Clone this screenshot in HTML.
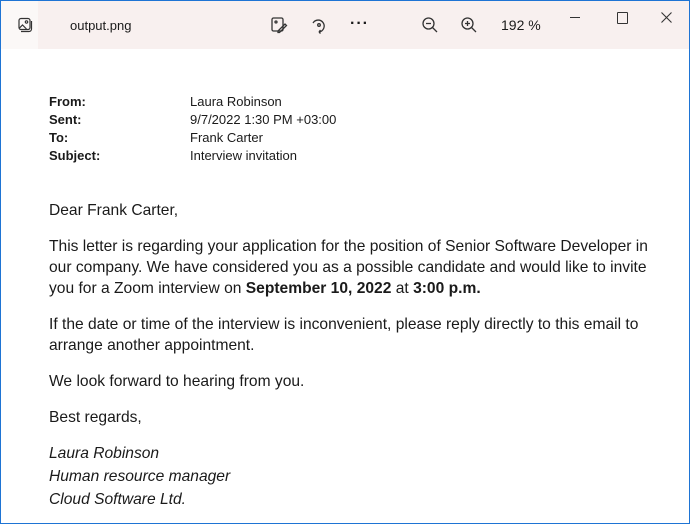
<html><head><style>
body{margin:0;width:690px;height:524px;overflow:hidden;background:#fff;font-family:"Liberation Sans",sans-serif;color:#1a1a1a;position:relative}
.win{position:absolute;left:0;top:0;width:688px;height:522px;border:1px solid #1e74d4;}
.bar{position:absolute;left:0;top:0;width:688px;height:48px;background:#f8f0ef}
.bar .l{position:absolute;left:0;top:0;width:37px;height:48px;background:#fbf8f7}
.t{position:absolute;font-size:13px;top:17px}
.hd{position:absolute;font-size:13px;line-height:18px}
.b{position:absolute;left:48px;font-size:15.6px;line-height:21px;width:612px}
</style></head><body>
<div class="win">
<div class="bar"><div class="l"></div>
<svg style="position:absolute;left:16px;top:16px" width="16" height="16" viewBox="0 0 16 16" fill="none" stroke="#333" stroke-width="1.2"><rect x="2" y="1.5" width="11" height="11" rx="2"/><path d="M4 14.5h8a2.5 2.5 0 0 0 2.5-2.5V4"/><circle cx="9.5" cy="5" r="1.2"/><path d="M2.5 11l3-3 4 4"/></svg>
<div class="t" style="left:69px">output.png</div>
<svg style="position:absolute;left:269px;top:15px" width="18" height="18" viewBox="0 0 18 18" fill="none" stroke="#333" stroke-width="1.3"><rect x="2" y="2" width="11" height="13" rx="1.5"/><path d="M8 15l7-7 1.5 1.5-7 7H8z"/><circle cx="6" cy="6" r="1"/></svg>
<svg style="position:absolute;left:309px;top:15px" width="18" height="18" viewBox="0 0 18 18" fill="none" stroke="#333" stroke-width="1.3"><path d="M3 7a6 6 0 1 1 6 9"/><path d="M9 16l1.5-2M9 16l1.5 1.5"/><circle cx="9" cy="9" r="1.3"/></svg>
<div class="t" style="left:349px;top:14px;font-size:16px;font-weight:bold;letter-spacing:1px">···</div>
<svg style="position:absolute;left:420px;top:15px" width="18" height="18" viewBox="0 0 18 18" fill="none" stroke="#333" stroke-width="1.3"><circle cx="7.5" cy="7.5" r="5.5"/><path d="M11.5 11.5l4.5 4.5M5 7.5h5"/></svg>
<svg style="position:absolute;left:459px;top:15px" width="18" height="18" viewBox="0 0 18 18" fill="none" stroke="#333" stroke-width="1.3"><circle cx="7.5" cy="7.5" r="5.5"/><path d="M11.5 11.5l4.5 4.5M5 7.5h5M7.5 5v5"/></svg>
<div class="t" style="left:500px;font-size:14px;top:16px">192 %</div>
<div style="position:absolute;left:569px;top:16px;width:10px;height:1px;background:#333"></div>
<div style="position:absolute;left:616px;top:11px;width:9px;height:10px;border:1px solid #333;border-radius:1px"></div>
<svg style="position:absolute;left:660px;top:11px" width="11" height="11" viewBox="0 0 11 11" stroke="#333" stroke-width="1.1"><path d="M.5 .5l10 10M10.5 .5l-10 10"/></svg>
</div>
<div class="hd" style="left:48px;top:92px;font-weight:bold">From:<br>Sent:<br>To:<br>Subject:</div>
<div class="hd" style="left:189px;top:92px">Laura Robinson<br>9/7/2022 1:30 PM +03:00<br>Frank Carter<br>Interview invitation</div>
<div class="b" style="top:199px">Dear Frank Carter,</div>
<div class="b" style="top:235px">This letter is regarding your application for the position of Senior Software Developer in our company. We have considered you as a possible candidate and would like to invite you for a Zoom interview on <b>September 10, 2022</b> at <b>3:00 p.m.</b></div>
<div class="b" style="top:313px">If the date or time of the interview is inconvenient, please reply directly to this email to arrange another appointment.</div>
<div class="b" style="top:370px">We look forward to hearing from you.</div>
<div class="b" style="top:406px">Best regards,</div>
<div class="b" style="top:441px;font-style:italic;line-height:23px">Laura Robinson<br>Human resource manager<br>Cloud Software Ltd.</div>
</div>
</body></html>
